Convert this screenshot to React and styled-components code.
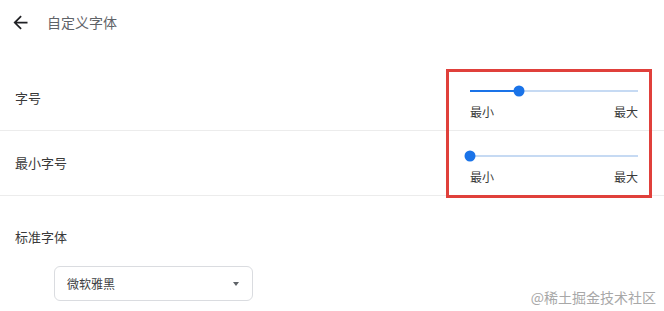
import styled, { createGlobalStyle } from "styled-components";

const GlobalStyle = createGlobalStyle`
  html, body {
    margin: 0;
    padding: 0;
    background: #ffffff;
  }
  body {
    font-family: "Noto Sans CJK SC", "Noto Sans", sans-serif;
    color: #202124;
  }
`;

const sliders = [
  { label: "字号", value: 29 },
  { label: "最小字号", value: 0 },
];

const App = () => {
  return (
    <>
      <GlobalStyle />
      <Page>
        <Header>
          <BackButton aria-label="back">
            <svg width="21" height="21" viewBox="0 0 24 24">
              <path
                d="M20 11H7.83l5.59-5.59L12 4l-8 8 8 8 1.41-1.41L7.83 13H20v-2z"
                fill="#202124"
              />
            </svg>
          </BackButton>
          <Title>自定义字体</Title>
        </Header>

        <SliderSection>
          {sliders.map((item) => (
            <Row key={item.label}>
              <Label>{item.label}</Label>
              <SliderGroup>
                <Track>
                  <Active style={{ width: `${item.value}%` }} />
                  <Thumb style={{ left: `${item.value}%` }} />
                </Track>
                <Ticks>
                  <span>最小</span>
                  <span>最大</span>
                </Ticks>
              </SliderGroup>
            </Row>
          ))}
          <Highlight />
        </SliderSection>

        <FontSection>
          <Label>标准字体</Label>
          <Select>
            <span>微软雅黑</span>
            <Caret />
          </Select>
        </FontSection>

        <Watermark>@稀土掘金技术社区</Watermark>
      </Page>
    </>
  );
};

const Page = styled.div`
  position: relative;
  width: 664px;
  height: 311px;
  overflow: hidden;
`;

const Header = styled.div`
  display: flex;
  align-items: center;
  height: 44px;
  padding-left: 10px;
`;

const BackButton = styled.div`
  display: flex;
  align-items: center;
  justify-content: center;
  width: 21px;
  height: 21px;
`;

const Title = styled.div`
  margin-left: 16px;
  font-size: 14px;
  color: #5f6368;
`;

const SliderSection = styled.div`
  position: relative;
  margin-top: 22px;
`;

const Row = styled.div`
  display: flex;
  align-items: center;
  justify-content: space-between;
  height: 64px;
  border-bottom: 1px solid #ececec;
  padding: 0 26px 0 15px;
`;

const Label = styled.div`
  font-size: 13px;
  line-height: 20px;
  color: #3a3a3a;
`;

const SliderGroup = styled.div`
  align-self: flex-start;
  width: 168px;
  margin-top: 19px;
`;

const Track = styled.div`
  position: relative;
  height: 2px;
  margin: 5px 0;
  background: #c6daf3;
`;

const Active = styled.div`
  height: 100%;
  background: #1a73e8;
`;

const Thumb = styled.div`
  position: absolute;
  top: 50%;
  width: 11px;
  height: 11px;
  border-radius: 50%;
  background: #1a73e8;
  transform: translate(-50%, -50%);
`;

const Ticks = styled.div`
  display: flex;
  justify-content: space-between;
  margin-top: 12px;
  font-size: 12px;
  line-height: 16px;
  color: #3a3a3a;
`;

const Highlight = styled.div`
  position: absolute;
  left: 446px;
  top: 3px;
  width: 200px;
  height: 123px;
  border: 3px solid #e0403b;
  pointer-events: none;
`;

const FontSection = styled.div`
  padding: 31px 0 0 15px;
`;

const Select = styled.div`
  display: flex;
  align-items: center;
  justify-content: space-between;
  box-sizing: border-box;
  width: 199px;
  height: 35px;
  margin: 19px 0 0 39px;
  padding: 0 13px 0 12px;
  border: 1px solid #dadce0;
  border-radius: 6px;
  font-size: 12px;
  color: #3c4043;
`;

const Caret = styled.div`
  width: 0;
  height: 0;
  border-left: 3.5px solid transparent;
  border-right: 3.5px solid transparent;
  border-top: 4px solid #5f6368;
`;

const Watermark = styled.div`
  position: absolute;
  right: 8px;
  bottom: 4px;
  font-size: 14px;
  color: #a8a8a8;
`;

export default App;
